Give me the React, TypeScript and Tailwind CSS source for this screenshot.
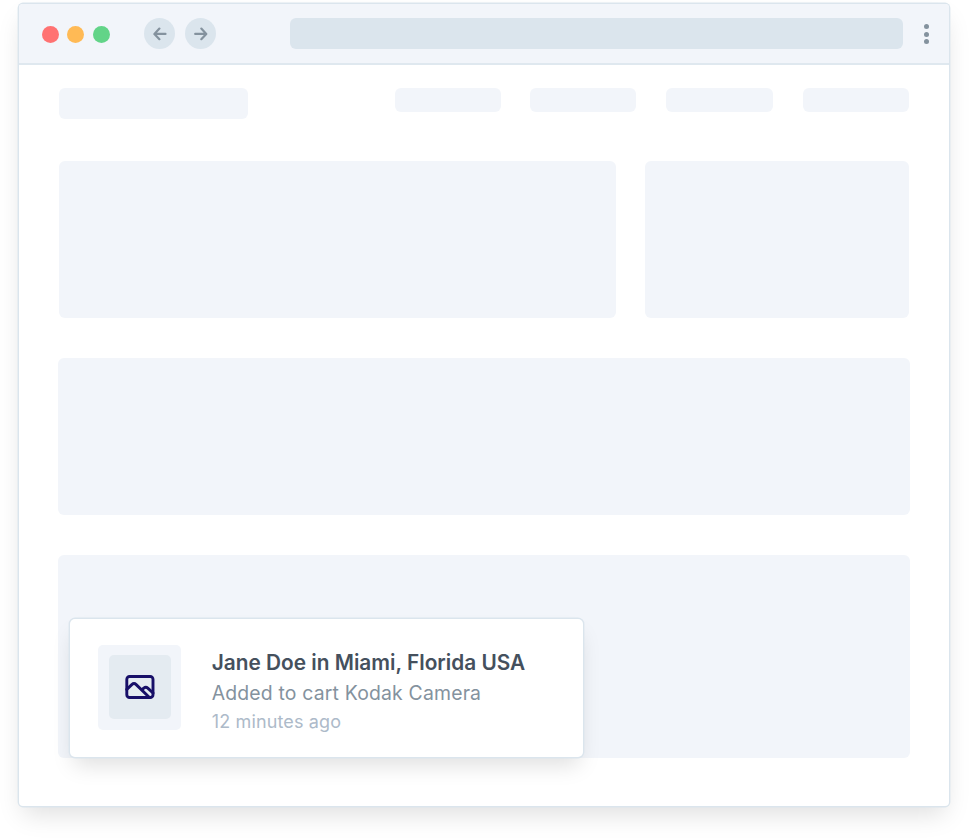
import { ReactNode } from "react";

function NavButton({ children }: { children: ReactNode }) {
  return (
    <div className="flex h-[31px] w-[31px] items-center justify-center rounded-full bg-[#dbe5ed]">
      <svg
        width="14"
        height="14"
        viewBox="0 0 14 14"
        fill="none"
        stroke="#84929e"
        strokeWidth="2.2"
        strokeLinecap="round"
        strokeLinejoin="round"
      >
        {children}
      </svg>
    </div>
  );
}

function BrowserBar() {
  return (
    <header className="flex h-[61px] items-center rounded-t-[4px] border-b-2 border-[#dfe8ef] bg-[#f2f5fa] pl-[22.6px]">
      <div className="flex gap-[8.5px] pt-px">
        <div className="h-[17px] w-[17px] rounded-full bg-[#ff7272]" />
        <div className="h-[17px] w-[17px] rounded-full bg-[#ffba55]" />
        <div className="h-[17px] w-[17px] rounded-full bg-[#62d488]" />
      </div>
      <nav className="ml-[34.5px] flex gap-[10px]">
        <NavButton>
          <path d="M12.5 6.9H1.6M6.4 1.6 1.4 6.9l5 5.3" />
        </NavButton>
        <NavButton>
          <path d="M1.2 6.9h11M7.3 1.6 12.3 6.9l-5 5.3" />
        </NavButton>
      </nav>
      <div className="ml-[74.4px] h-[31px] w-[612.5px] rounded-[6px] bg-[#dbe5ed]" />
      <div className="ml-[21px] flex flex-col gap-[2.8px] pt-px">
        <div className="h-[5px] w-[5px] rounded-full bg-[#84929e]" />
        <div className="h-[5px] w-[5px] rounded-full bg-[#84929e]" />
        <div className="h-[5px] w-[5px] rounded-full bg-[#84929e]" />
      </div>
    </header>
  );
}

function ImageIcon() {
  return (
    <svg
      width="30"
      height="24"
      viewBox="0 0 30 24"
      fill="none"
      stroke="#170f68"
      strokeWidth="2.9"
      strokeLinecap="round"
      strokeLinejoin="round"
    >
      <rect x="1.8" y="1.45" width="26.2" height="21.1" rx="2.8" />
      <path d="M1.8 14.4 6.8 9.6Q9 7.6 11.2 9.6L24.2 22.2" />
      <path d="M17.2 14.8 18.8 13.1Q20.8 11.4 22.8 13.1L28 18" />
    </svg>
  );
}

function Notification() {
  return (
    <aside className="absolute top-[64px] left-[12px] flex h-[138px] w-[513px] items-start rounded-[5px] bg-white pl-[28px] shadow-[0_0_0_1.4px_#dbe5ed,0_12px_22px_-4px_rgba(0,0,0,0.13)]">
      <div className="mt-[25.5px] flex h-[85px] w-[83px] items-start justify-center rounded-[5px] bg-[#f2f5fa] pt-[10px]">
        <div className="flex h-[64px] w-[62px] items-center justify-center rounded-[5px] bg-[#e4ebf1]">
          <ImageIcon />
        </div>
      </div>
      <div className="mt-[28.5px] ml-[30.7px] whitespace-nowrap">
        <p className="text-[20.8px] leading-[30px] font-semibold tracking-[0.01px] text-[#45505d]">
          Jane Doe in Miami, Florida USA
        </p>
        <p className="text-[19.4px] leading-[30px] tracking-[0.18px] text-[#84929e]">
          Added to cart Kodak Camera
        </p>
        <p className="text-[18px] leading-[28px] tracking-[0.14px] text-[#adbac9]">
          12 minutes ago
        </p>
      </div>
    </aside>
  );
}

export default function App() {
  return (
    <div className="h-[840px] w-[969px] overflow-hidden bg-white pt-[4px] pl-[19px] font-['Inter',sans-serif]">
      <div className="h-[802px] w-[930px] rounded-[4px] bg-white shadow-[0_0_0_1.4px_#dbe5ed,0_12px_24px_-4px_rgba(0,0,0,0.13)]">
        <BrowserBar />
        <main className="pt-[23.4px] pr-[39px] pl-[39px]">
          <div className="flex items-start justify-between px-[1px]">
            <div className="h-[31px] w-[189px] rounded-[6px] bg-[#f2f5fa]" />
            <div className="flex gap-[29.8px]">
              <div className="h-[23.5px] w-[106px] rounded-[6px] bg-[#f2f5fa]" />
              <div className="h-[23.5px] w-[106px] rounded-[6px] bg-[#f2f5fa]" />
              <div className="h-[23.5px] w-[107px] rounded-[6px] bg-[#f2f5fa]" />
              <div className="h-[23.5px] w-[106px] rounded-[6px] bg-[#f2f5fa]" />
            </div>
          </div>
          <div className="mt-[41.3px] flex gap-[29px] px-[1px]">
            <div className="h-[157.5px] w-[557px] rounded-[6px] bg-[#f2f5fa]" />
            <div className="h-[157.5px] flex-1 rounded-[6px] bg-[#f2f5fa]" />
          </div>
          <div className="mt-[39.6px] h-[157.5px] rounded-[6px] bg-[#f2f5fa]" />
          <div className="relative mt-[40px] h-[203px] rounded-[6px] bg-[#f2f5fa]">
            <Notification />
          </div>
        </main>
      </div>
    </div>
  );
}
